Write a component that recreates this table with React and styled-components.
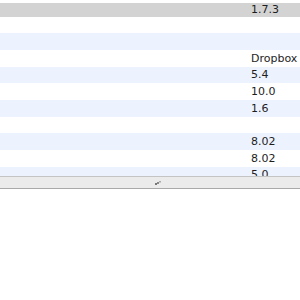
import React from "react";
import styled, { createGlobalStyle } from "styled-components";

const Global = createGlobalStyle`
  html, body { margin: 0; padding: 0; background: #ffffff; }
  body { font-family: "DejaVu Sans", "Liberation Sans", sans-serif; }
`;

const Window = styled.div`
  width: 300px;
  display: flex;
  flex-direction: column;
`;

const Table = styled.div`
  height: 176px;
  overflow: hidden;
  padding-top: 2.67px;
  box-sizing: border-box;
  display: flex;
  flex-direction: column;
`;

const Row = styled.div`
  display: grid;
  grid-template-columns: 251px 1fr;
  align-items: center;
  flex: 0 0 auto;
  height: ${(p) => (p.$selected ? "14px" : "16.667px")};
  background: ${(p) =>
    p.$selected ? "#d3d3d3" : p.$alt ? "#edf3fe" : "#ffffff"};
`;

const Cell = styled.div`
  font-size: 11px;
  line-height: 13px;
  color: #1e1e1e;
  white-space: nowrap;
  overflow: hidden;
`;

const BottomBar = styled.div`
  height: 11px;
  border-top: 1px solid #c4c4c4;
  border-bottom: 1px solid #a9a9a9;
  background: #ebebeb;
  display: flex;
  align-items: center;
  justify-content: center;
  padding-left: 16px;
`;

const Grip = () => (
  <svg width="6" height="4" viewBox="0 0 6 4">
    <rect x="0" y="2" width="2" height="2" fill="#777" />
    <rect x="2" y="1" width="2" height="2" fill="#888" />
    <rect x="4" y="0" width="2" height="1.5" fill="#aaa" />
  </svg>
);

const rows = [
  { v: "1.7.3", selected: true },
  { v: "" },
  { v: "" },
  { v: "Dropbox" },
  { v: "5.4" },
  { v: "10.0" },
  { v: "1.6" },
  { v: "" },
  { v: "8.02" },
  { v: "8.02" },
  { v: "5.0" },
];

export default function App() {
  return (
    <>
      <Global />
      <Window>
        <Table>
          {rows.map((r, i) => (
            <Row key={i} $selected={r.selected} $alt={i % 2 === 0}>
              <Cell />
              <Cell>{r.v}</Cell>
            </Row>
          ))}
        </Table>
        <BottomBar>
          <Grip />
        </BottomBar>
      </Window>
    </>
  );
}
